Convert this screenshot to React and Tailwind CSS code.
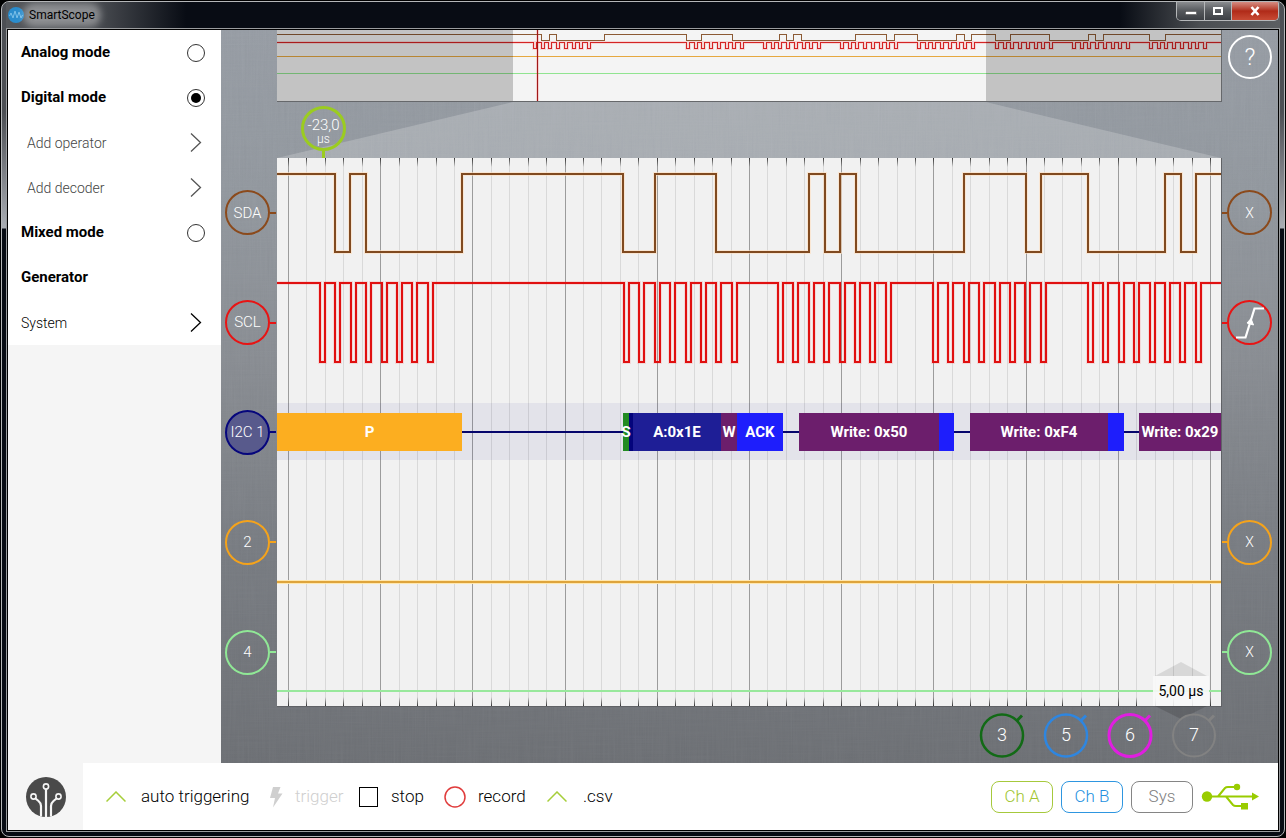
import React, { useState } from 'react';

// --- Signal data (x in plot units, plot is 944 x 548) ---
const PLOT_W = 944;
const PLOT_H = 548;

const SDA_EDGES = [58, 73, 89, 185, 346, 378, 439, 532, 548, 563, 579, 687, 749, 764, 811, 888, 904, 919];
const SCL_GROUPS = [43, 347, 501, 656, 811];

const SDA_PREVIEW_EDGES = [
  264, 272, 279, 327, 409, 424, 455, 502, 509, 516, 524, 578, 609, 617, 640, 679, 687, 694, 718, 733, 772, 811, 818,
  826, 872, 888,
];
const SCL_PREVIEW_GROUPS = [256, 409, 486, 563, 640, 718, 795, 872];

const GRID_LINES = Array.from({ length: 51 }, (_, i) => ({
  x: Math.round(11 + i * 18.44) + 0.5,
  major: i % 5 === 0,
}));

// Decoded I2C frames, in the same units as the plot width
const FRAMES = [
  { w: 185, label: 'P', color: 'bg-[#fcae20]' },
  { w: 161 },
  { w: 6, label: 'S', color: 'bg-[#228b22]', raised: true },
  { w: 4, label: '', color: 'bg-[#04047c]' },
  { w: 88, label: 'A:0x1E', color: 'bg-[#1e1e96]' },
  { w: 16, label: 'W', color: 'bg-[#6c1e6c]', raised: true },
  { w: 46, label: 'ACK', color: 'bg-[#1e1efc]' },
  { w: 16 },
  { w: 140, label: 'Write: 0x50', color: 'bg-[#6c1e6c]' },
  { w: 15, label: '', color: 'bg-[#1e1efc]' },
  { w: 16 },
  { w: 138, label: 'Write: 0xF4', color: 'bg-[#6c1e6c]' },
  { w: 16, label: '', color: 'bg-[#1e1efc]' },
  { w: 15 },
  { w: 82, label: 'Write: 0x29', color: 'bg-[#6c1e6c]' },
];

// Square wave that starts high and toggles on every edge
const wave = (edges, high, low) => {
  let level = high;
  let d = `M0 ${high}`;
  edges.forEach((x) => {
    level = level === high ? low : high;
    d += `H${x}V${level}`;
  });
  return `${d}H${PLOT_W}`;
};

// Eight clock pulses per group
const clockEdges = (groups, pitch, width) =>
  groups.flatMap((start) =>
    Array.from({ length: 8 }, (_, i) => Math.round(start + i * pitch)).flatMap((x) => [x, x + width])
  );

const SDA_PATH = wave(SDA_EDGES, 16, 94);
const SCL_PATH = wave(clockEdges(SCL_GROUPS, 15.4, 5), 125, 204);
const SDA_PREVIEW = wave(SDA_PREVIEW_EDGES.map((x) => x + 0.5), 4.5, 10.5);
const SCL_PREVIEW = wave(clockEdges(SCL_PREVIEW_GROUPS, 7.7, 3).map((x) => x + 0.5), 12.5, 18.5);

const LEFT_BADGES = [
  { label: 'SDA', ring: 'border-[#8b4a1c]', stem: 'bg-[#8b4a1c]', fill: '' },
  { label: 'SCL', ring: 'border-[#e81414]', stem: 'bg-[#e81414]', fill: '' },
  { label: 'I2C 1', ring: 'border-[#06067c]', stem: 'bg-[#06067c]', fill: 'bg-[#585a8c]' },
  { label: '2', ring: 'border-[#f5a31b]', stem: 'bg-[#f5a31b]', fill: '' },
  { label: '4', ring: 'border-[#90e896]', stem: 'bg-[#90e896]', fill: '' },
];

const RIGHT_BADGES = [
  { label: 'X', ring: 'border-[#8b4a1c]', stem: 'bg-[#8b4a1c]' },
  { label: 'edge', ring: 'border-[#e81414]', stem: 'bg-[#e81414]' },
  null,
  { label: 'X', ring: 'border-[#f5a31b]', stem: 'bg-[#f5a31b]' },
  { label: 'X', ring: 'border-[#90e896]', stem: 'bg-[#90e896]' },
];

const SPARE_CHANNELS = [
  { label: '3', color: '#126a16', width: 2.5 },
  { label: '5', color: '#2e86e0', width: 2.5 },
  { label: '6', color: '#e01ee0', width: 3 },
  { label: '7', color: '#828282', width: 2 },
];

const ChevronRight = ({ className }) => (
  <svg viewBox="0 0 12 20" className={`h-5 w-3 ${className}`} fill="none" stroke="currentColor" strokeWidth="1.3">
    <path d="M1 0.5L10.5 9.5L1 18.5" />
  </svg>
);

const ChevronUp = () => (
  <svg viewBox="0 0 20 12" className="h-3 w-5 text-[#a6ce3a]" fill="none" stroke="currentColor" strokeWidth="1.5">
    <path d="M0.5 10.5L10 1L19.5 10.5" />
  </svg>
);

const TitleBar = () => (
  <header className="flex h-[26px] items-start justify-between bg-[linear-gradient(to_right,#55585c_0px,#4a4d52_90px,#080c14_180px,#080c14_calc(100%-160px),#4b4e52_calc(100%-80px),#5c5f62_100%)]">
    <div className="flex h-[25px] items-center gap-[5px] pl-0.5">
      <svg viewBox="0 0 16 16" className="h-4 w-4">
        <circle cx="8" cy="8" r="8" fill="#2a8ccc" />
        <path d="M1.5 9L3 6L5 11L7 4L9 11L11 5L13 11L14.5 8" fill="none" stroke="#7cc0e8" strokeWidth="1" />
      </svg>
      <h1 className="rounded-full bg-white/35 text-xs leading-3 text-black shadow-[0_0_7px_6px_rgba(255,255,255,0.35)]">SmartScope</h1>
    </div>
    <div className="mr-px flex h-[19px] overflow-hidden rounded-b-[5px] border border-t-0 border-[#b5b7b9]">
      <button aria-label="Minimize" className="flex w-7 items-center justify-center border-r border-[#b5b7b9] bg-linear-to-b from-[#8b8d90] via-[#55585c] to-[#3d4045]">
        <svg viewBox="0 0 12 10" className="h-2.5 w-3"><rect x="0.5" y="5.5" width="11" height="3" fill="#fff" stroke="#444" strokeWidth="0.5" /></svg>
      </button>
      <button aria-label="Maximize" className="flex w-[27px] items-center justify-center border-r border-[#b5b7b9] bg-linear-to-b from-[#8b8d90] via-[#55585c] to-[#3d4045]">
        <svg viewBox="0 0 12 10" className="h-2.5 w-3"><rect x="2" y="2" width="8" height="6" fill="none" stroke="#fff" strokeWidth="2" /></svg>
      </button>
      <button aria-label="Close" className="flex w-[46px] items-center justify-center bg-linear-to-b from-[#d48c82] via-[#b02a18] to-[#c84a34]">
        <svg viewBox="0 0 12 10" className="h-2.5 w-3" fill="none"><path d="M2.500 1L9.500 9M9.500 1L2.500 9" stroke="#fff" strokeWidth="2.600" /></svg>
      </button>
    </div>
  </header>
);

const Sidebar = ({ mode, setMode }) => {
  const modeRow = (value, label) => (
    <label className="flex h-[45px] items-center justify-between pr-4 pl-[13px] font-bold">
      {label}
      <input
        type="radio"
        name="mode"
        value={value}
        checked={mode === value}
        onChange={() => setMode(value)}
        className="h-[18px] w-[18px] appearance-none rounded-full border border-[#333] bg-clip-content p-[3px] checked:bg-black"
      />
    </label>
  );

  return (
    <aside className="w-[213px] shrink-0 bg-[#f5f5f5]">
      <nav className="bg-white text-[15px] text-black">
        {modeRow('analog', 'Analog mode')}
        {modeRow('digital', 'Digital mode')}
        <button className="flex h-[45px] w-full items-center justify-between pr-[19px] pl-[19px] text-sm font-light text-[#444]">
          Add operator
          <ChevronRight className="text-[#555]" />
        </button>
        <button className="flex h-[45px] w-full items-center justify-between pr-[19px] pl-[19px] text-sm font-light text-[#444]">
          Add decoder
          <ChevronRight className="text-[#555]" />
        </button>
        {modeRow('mixed', 'Mixed mode')}
        <button className="flex h-[45px] w-full items-center pl-[13px] font-bold">Generator</button>
        <button className="flex h-[45px] w-full items-center justify-between pr-[19px] pl-[13px] text-sm font-light">
          System
          <ChevronRight className="text-black" />
        </button>
      </nav>
    </aside>
  );
};

// Zoomed-out view of the whole acquisition buffer
const Preview = () => (
  <div className="flex-1 border-r border-b border-[#66686b] bg-[#f4f4f4]">
    <svg viewBox="0 0 944 71" preserveAspectRatio="none" className="block h-[71px] w-full" fill="none" shapeRendering="crispEdges">
      <path d={SDA_PREVIEW} stroke="#8c5a34" />
      <path d={SCL_PREVIEW} stroke="#ff0000" strokeOpacity="0.12" strokeWidth="3" />
      <path d={SCL_PREVIEW} stroke="#d42424" />
      <path d="M0 26.5H944" stroke="#e6a840" />
      <path d="M0 43.5H944" stroke="#90e490" />
      <path d="M260.5 0V71" stroke="#ff0000" strokeOpacity="0.15" strokeWidth="3" />
      <path d="M260.5 0V71" stroke="#a01818" />
      <path d="M0 0H236V71H0ZM709 0H944V71H709Z" fill="#000" fillOpacity="0.2" />
    </svg>
  </div>
);

const Plot = () => (
  <div className="relative flex-1 border-r border-b border-[#606266] bg-[#f1f1f1]">
    <svg viewBox={`0 0 ${PLOT_W} ${PLOT_H}`} preserveAspectRatio="none" className="absolute inset-0 h-full w-full" fill="none" shapeRendering="crispEdges">
      <defs>
        <linearGradient id="tickTop" x1="0" y1="0" x2="0" y2="1">
          <stop offset="0" stopColor="#333" />
          <stop offset="1" stopColor="#333" stopOpacity="0" />
        </linearGradient>
        <linearGradient id="tickBottom" x1="0" y1="1" x2="0" y2="0">
          <stop offset="0" stopColor="#333" />
          <stop offset="1" stopColor="#333" stopOpacity="0" />
        </linearGradient>
      </defs>
      {GRID_LINES.map(({ x, major }) => (
        <g key={x}>
          <path d={`M${x} 0V${PLOT_H}`} stroke={major ? '#9c9c9c' : '#d9d9d9'} />
          <rect x={x - 0.5} y="0" width="1" height="9" fill="url(#tickTop)" />
          <rect x={x - 0.5} y={PLOT_H - 9} width="1" height="9" fill="url(#tickBottom)" />
        </g>
      ))}
      <path d={SDA_PATH} stroke="#ffe0c0" strokeOpacity="0.6" strokeWidth="4" />
      <path d={SDA_PATH} stroke="#804a20" strokeWidth="2" />
      <path d={SCL_PATH} stroke="#ff0000" strokeOpacity="0.1" strokeWidth="4" />
      <path d={SCL_PATH} stroke="#e01010" strokeWidth="2" />
      <path d="M0 424H944" stroke="#ffe8b0" strokeWidth="4" />
      <path d="M0 424H944" stroke="#dea43c" strokeWidth="2" />
      <path d="M0 533H944" stroke="#98e89c" strokeWidth="2" />
    </svg>

    {/* Decoder lane sits in the third of five channel rows */}
    <div className="relative grid h-full grid-rows-5">
      <div className="row-start-3 flex h-[57px] items-center self-center overflow-hidden bg-[#00007c]/6 text-[15px] font-bold text-white">
        {FRAMES.map((frame, i) => (
          <div
            key={i}
            className={`flex h-[38px] shrink-0 items-center justify-center whitespace-nowrap ${frame.color || ''} ${frame.raised ? 'z-10' : ''}`}
            style={{ width: `${(frame.w / PLOT_W) * 100}%` }}
          >
            {frame.color ? frame.label : <span className="h-0.5 w-full bg-[#06066c]" />}
          </div>
        ))}
      </div>
    </div>

    {/* Time base */}
    <div className="absolute right-3 -bottom-3.5 w-14">
      <svg viewBox="0 0 56 14" className="block h-3.5 w-14"><path d="M2 14L28 0L54 14Z" fill="#000" fillOpacity="0.1" /></svg>
      <div className="flex h-[30px] items-center justify-center bg-[#f8f8f8]/90 text-sm whitespace-nowrap text-black">5,00 µs</div>
      <svg viewBox="0 0 56 14" className="block h-3.5 w-14"><path d="M2 0L28 13L54 0Z" fill="#000" fillOpacity="0.14" /></svg>
    </div>
  </div>
);

const EdgeIcon = () => (
  <svg viewBox="0 0 40 40" className="h-10 w-10 shrink-0" fill="none" stroke="#fff" strokeWidth="2.2">
    <path d="M6 34.5H15.500L24.500 5.500H34" />
    <path d="M21 15.500L23.500 22L17 20Z" fill="#fff" strokeWidth="1" />
  </svg>
);

const Scope = () => (
  <main className="relative flex min-w-0 flex-1 flex-col bg-[linear-gradient(to_bottom,#969ca4_0%,#91979e_22%,#878b91_45%,#75797f_72%,#6a6d72_100%)]">
    {/* Brushed fabric texture */}
    <svg className="absolute inset-0 h-full w-full opacity-8" aria-hidden="true">
      <filter id="weaveH"><feTurbulence type="fractalNoise" baseFrequency="0.02 0.7" numOctaves="2" /><feColorMatrix type="saturate" values="0" /></filter>
      <filter id="weaveV"><feTurbulence type="fractalNoise" baseFrequency="0.7 0.02" numOctaves="2" seed="4" /><feColorMatrix type="saturate" values="0" /></filter>
      <rect width="100%" height="100%" filter="url(#weaveH)" />
      <rect width="100%" height="100%" filter="url(#weaveV)" />
    </svg>

    <div className="relative flex h-[72px] pl-14">
      <Preview />
      <div className="flex w-14 justify-center pt-[5px]">
        <button aria-label="Help" className="flex h-11 w-11 items-center justify-center rounded-full border-2 border-white text-2xl font-light text-white">
          ?
        </button>
      </div>
    </div>

    <div className="relative flex h-14 pr-[57px] pl-14">
      <div className="relative flex-1 pt-1 pl-6">
        <svg viewBox="0 0 944 56" preserveAspectRatio="none" className="absolute inset-0 h-full w-full">
          <path d="M236 0H709L944 56H0Z" fill="#fff" fillOpacity="0.2" />
        </svg>
        <div className="relative flex w-[45px] flex-col items-center">
          <button className="flex h-[45px] w-[45px] flex-col items-center justify-center rounded-full border-[3px] border-[#9bcc20] pt-1 font-light text-white">
            <span className="text-[15px] leading-4">-23,0</span>
            <span className="text-xs leading-3">µs</span>
          </button>
          <span className="h-[7px] w-[3px] bg-[#9bcc20]" />
        </div>
      </div>
    </div>

    <div className="relative flex min-h-0 flex-1">
      <div className="flex w-14 flex-col">
        {LEFT_BADGES.map((badge) => (
          <div key={badge.label} className="flex flex-1 items-center pl-1">
            <button className={`flex h-[45px] w-[45px] shrink-0 items-center justify-center rounded-full border-2 text-[15px] font-light whitespace-nowrap text-white ${badge.ring} ${badge.fill}`}>
              {badge.label}
            </button>
            <span className={`h-0.5 w-1.5 ${badge.stem}`} />
          </div>
        ))}
      </div>
      <Plot />
      <div className="flex w-14 flex-col">
        {RIGHT_BADGES.map((badge, i) => (
          <div key={i} className="flex flex-1 items-center">
            {badge && (
              <>
                <span className={`h-0.5 w-[5px] ${badge.stem}`} />
                <button aria-label={badge.label} className={`flex h-[45px] w-[45px] shrink-0 items-center justify-center rounded-full border-2 text-sm font-light text-white ${badge.ring}`}>
                  {badge.label === 'edge' ? <EdgeIcon /> : badge.label}
                </button>
              </>
            )}
          </div>
        ))}
      </div>
    </div>

    <div className="relative flex h-14 items-center justify-end gap-5 pr-[62px]">
      {SPARE_CHANNELS.map((channel) => (
        <button key={channel.label} className="grid h-11 w-11 place-items-center text-lg font-light text-white">
          <svg viewBox="0 0 44 44" className="col-start-1 row-start-1 h-11 w-11 overflow-visible" fill="none" stroke={channel.color} strokeWidth={channel.width}>
            <circle cx="22" cy="22.5" r="21" />
            <path d="M37 7.500L42 2.500" strokeWidth="3" />
          </svg>
          <span className="col-start-1 row-start-1">{channel.label}</span>
        </button>
      ))}
    </div>
  </main>
);

const BottomBar = () => (
  <footer className="flex h-[67px] shrink-0 bg-white text-[17px] font-light text-black">
    <div className="flex w-[75px] items-center justify-center bg-[#f5f5f5]">
      <svg viewBox="0 0 40 40" className="h-10 w-10">
        <circle cx="20" cy="20" r="20" fill="#4a4a4a" />
        <g fill="none" stroke="#f5f5f5" strokeWidth="1.6">
          <circle cx="20" cy="9.5" r="2.6" />
          <circle cx="7.5" cy="19.5" r="2.6" />
          <circle cx="32.5" cy="19.5" r="2.6" />
          <path d="M20 12V40" strokeWidth="2.2" />
          <path d="M9.5 21.5L12.5 24Q15 26 15 29V39.5" strokeWidth="2.2" />
          <path d="M30.5 21.5L27.5 24Q25 26 25 29V39.5" strokeWidth="2.2" />
        </g>
      </svg>
    </div>

    <div className="flex flex-1 items-center pt-px pl-[23px] whitespace-nowrap">
      <button className="flex w-[162px] items-center gap-[15px]">
        <ChevronUp />
        auto triggering
      </button>
      <button disabled className="flex w-[91px] items-center gap-[11px] text-[#cfcfcf]">
        <svg viewBox="0 0 16 22" className="h-[22px] w-4" fill="#cfcfcf">
          <path d="M5 1H12.5L10 7.5H14.5L5 21.5L7 12H2Z" />
        </svg>
        trigger
      </button>
      <button className="flex w-[85px] items-center gap-[13px]">
        <span className="h-5 w-[19px] border border-black" />
        stop
      </button>
      <button className="flex w-[103px] items-center gap-3">
        <svg viewBox="0 0 22 22" className="h-[22px] w-[22px]" fill="none" stroke="#e03c3c" strokeWidth="1.5">
          <circle cx="11" cy="11" r="10" />
        </svg>
        record
      </button>
      <button className="flex items-center gap-4">
        <ChevronUp />
        .csv
      </button>
    </div>

    <div className="flex items-center gap-2 pr-[18px]">
      <button className="h-8 w-[62px] rounded-lg border border-[#a6c93c] text-[#a0c52e]">Ch A</button>
      <button className="h-8 w-[62px] rounded-lg border border-[#2e96e0] text-[#2490e0]">Ch B</button>
      <button className="h-8 w-[62px] rounded-lg border border-[#858585] text-[#808080]">Sys</button>
      <svg viewBox="0 0 59 28" className="h-7 w-[59px]" fill="none" stroke="#99cc00" strokeWidth="2">
        <path d="M5 13.500H52M17 13.500L24 5Q25 4 27 4H35M25 13.500L32 22Q33 23 35 23H42" />
        <circle cx="6" cy="13.500" r="5.200" fill="#99cc00" stroke="none" />
        <circle cx="36" cy="4" r="3.200" fill="#99cc00" stroke="none" />
        <rect x="40" y="20" width="7" height="6.500" fill="#99cc00" stroke="none" />
        <path d="M51 9.500L58 13.500L51 17.500Z" fill="#99cc00" stroke="none" />
      </svg>
    </div>
  </footer>
);

export default function App() {
  const [mode, setMode] = useState('digital');

  return (
    <div className="h-screen min-h-[600px] bg-black p-px font-['Roboto',sans-serif]">
      <div className="flex h-full flex-col overflow-hidden rounded-lg border border-[#b4b6b8] bg-[linear-gradient(to_bottom,#4c4f54_0px,#4c4f54_110px,#a9adb3_226px,#080c14_227px)] px-1 pb-1">
        <TitleBar />
        <div className="flex min-h-0 flex-1 flex-col border border-[#9a9c9e] bg-black p-px">
          <div className="flex min-h-0 flex-1">
            <Sidebar mode={mode} setMode={setMode} />
            <Scope />
          </div>
          <BottomBar />
        </div>
      </div>
    </div>
  );
}
